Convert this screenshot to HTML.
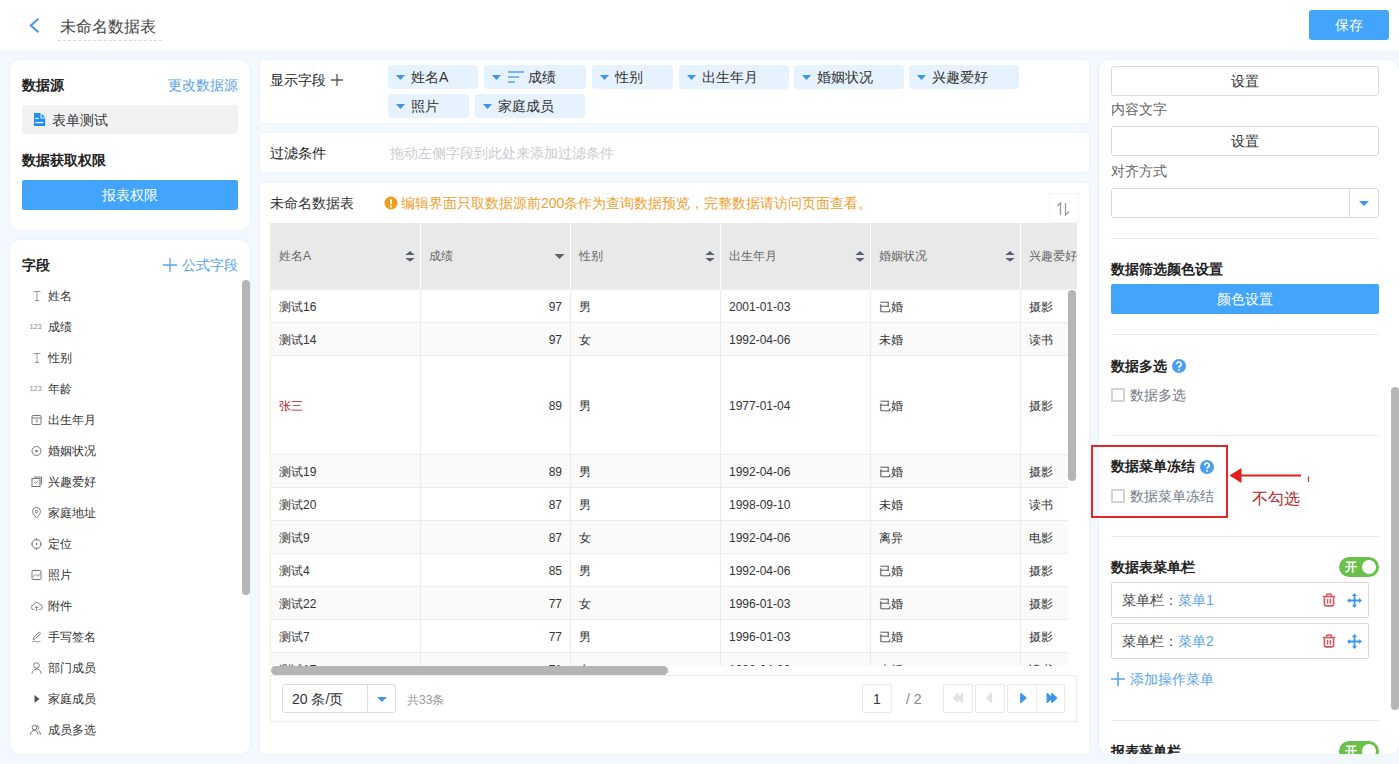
<!DOCTYPE html>
<html><head><meta charset="utf-8">
<style>
*{box-sizing:border-box;margin:0;padding:0}
html,body{width:1399px;height:764px;overflow:hidden}
body{position:relative;background:#f2f8fd;font-family:"Liberation Sans",sans-serif;font-size:14px;color:#333}
.a{position:absolute}
.t{position:absolute;white-space:nowrap;line-height:20px;height:20px}
.panel{position:absolute;background:#fff;box-shadow:0 0 2px rgba(30,90,150,0.10)}
.b{font-weight:bold;color:#222}
.blue{color:#5aa3e6}
.btnb{position:absolute;background:#42a5fb;color:#fff;text-align:center;border-radius:2px;font-size:14px}
.hdiv{position:absolute;height:1px;background:#e9e9e9}
</style></head><body>
<!-- header -->
<div class="a" style="left:0;top:0;width:1399px;height:50px;background:#fff"></div>
<svg class="a" style="left:28px;top:17px" width="14" height="18" viewBox="0 0 14 18"><path d="M10.5 1.8 L2.8 8.5 L10.5 15.2" fill="none" stroke="#4a94e6" stroke-width="2"/></svg>
<div class="t" style="left:60px;top:17px;font-size:16px;color:#444">未命名数据表</div>
<div class="a" style="left:58px;top:40px;width:104px;border-top:1px dashed #d8d8d8"></div>
<div class="btnb" style="left:1309px;top:10px;width:80px;height:30px;line-height:30px;border-radius:3px">保存</div>

<!-- left panel 1 -->
<div class="panel" style="left:10px;top:60px;width:240px;height:170px;border-radius:10px"></div>
<div class="t b" style="left:22px;top:75px">数据源</div>
<div class="t blue" style="left:168px;top:75px">更改数据源</div>
<div class="a" style="left:22px;top:105px;width:216px;height:29px;background:#f2f2f2;border-radius:2px"></div>
<svg class="a" style="left:33px;top:113px" width="13" height="14" viewBox="0 0 13 14"><path d="M1 0 H7.5 V5.6 H12.2 V13 H1 Z" fill="#1e8cf0"/><path d="M8.6 0.6 L12.2 4.6 H8.6 Z" fill="#1e8cf0"/><rect x="2.2" y="4.8" width="3.4" height="1.3" fill="#fff"/><rect x="2.2" y="8.9" width="8.2" height="1.3" fill="#fff"/></svg>
<div class="t" style="left:52px;top:110px">表单测试</div>
<div class="t b" style="left:22px;top:150px">数据获取权限</div>
<div class="btnb" style="left:22px;top:180px;width:216px;height:30px;line-height:30px">报表权限</div>

<!-- left panel 2 -->
<div class="panel" style="left:10px;top:240px;width:240px;height:514px;border-radius:10px"></div>
<div class="t b" style="left:22px;top:255px">字段</div>
<svg class="a" style="left:163px;top:258px" width="14" height="14" viewBox="0 0 14 14"><path d="M7 0 V14 M0 7 H14" stroke="#5aa3e6" stroke-width="1.3"/></svg>
<div class="t blue" style="left:182px;top:255px">公式字段</div>
<div class="a" style="left:242px;top:280px;width:8px;height:315px;background:#b5b5b5;border-radius:4px"></div>
<svg class="a" style="left:31px;top:290px" width="12" height="12" viewBox="0 0 11 12"><path d="M2 1.5 H9 M5.5 1.5 V10.5 M3.5 10.5 H7.5" stroke="#8c8c8c" stroke-width="0.9" fill="none"/></svg>
<div class="t" style="left:48px;top:286px;color:#333;font-size:12px">姓名</div>
<div class="a" style="left:29.5px;top:321px;font-size:7.4px;line-height:12px;color:#8a8a8a">123</div>
<div class="t" style="left:48px;top:317px;color:#333;font-size:12px">成绩</div>
<svg class="a" style="left:31px;top:352px" width="12" height="12" viewBox="0 0 11 12"><path d="M2 1.5 H9 M5.5 1.5 V10.5 M3.5 10.5 H7.5" stroke="#8c8c8c" stroke-width="0.9" fill="none"/></svg>
<div class="t" style="left:48px;top:348px;color:#333;font-size:12px">性别</div>
<div class="a" style="left:29.5px;top:383px;font-size:7.4px;line-height:12px;color:#8a8a8a">123</div>
<div class="t" style="left:48px;top:379px;color:#333;font-size:12px">年龄</div>
<svg class="a" style="left:31px;top:414px" width="12" height="12" viewBox="0 0 11 12"><rect x="0.5" y="1.5" width="9" height="9" rx="1" stroke="#777" fill="none"/><path d="M0.5 4 H9.5" stroke="#777"/><path d="M4 6 H6 L5 9" stroke="#777" fill="none" stroke-width="0.8"/></svg>
<div class="t" style="left:48px;top:410px;color:#333;font-size:12px">出生年月</div>
<svg class="a" style="left:31px;top:445px" width="12" height="12" viewBox="0 0 11 12"><circle cx="5" cy="6" r="4.5" stroke="#777" fill="none"/><circle cx="5" cy="6" r="1.3" fill="#777"/></svg>
<div class="t" style="left:48px;top:441px;color:#333;font-size:12px">婚姻状况</div>
<svg class="a" style="left:31px;top:476px" width="12" height="12" viewBox="0 0 11 12"><rect x="0.5" y="2.5" width="8" height="8" stroke="#777" fill="none"/><path d="M2.5 1 H10 V8.5" stroke="#777" fill="none"/><path d="M2.5 6 L4 7.5 L7 4.5" stroke="#777" fill="none" stroke-width="0.8"/></svg>
<div class="t" style="left:48px;top:472px;color:#333;font-size:12px">兴趣爱好</div>
<svg class="a" style="left:31px;top:507px" width="12" height="12" viewBox="0 0 11 12"><path d="M5 11 C2 7.5 1 6 1 4.5 A4 4 0 0 1 9 4.5 C9 6 8 7.5 5 11 Z" stroke="#777" fill="none"/><circle cx="5" cy="4.5" r="1.3" stroke="#777" fill="none"/></svg>
<div class="t" style="left:48px;top:503px;color:#333;font-size:12px">家庭地址</div>
<svg class="a" style="left:31px;top:538px" width="12" height="12" viewBox="0 0 11 12"><circle cx="5" cy="6" r="4.5" stroke="#777" fill="none"/><circle cx="5" cy="6" r="1" fill="#777"/><path d="M5 0.5 V2.5 M5 9.5 V11.5 M-0.5 6 H1.5 M8.5 6 H10.5" stroke="#777"/></svg>
<div class="t" style="left:48px;top:534px;color:#333;font-size:12px">定位</div>
<svg class="a" style="left:31px;top:569px" width="12" height="12" viewBox="0 0 11 12"><rect x="0.5" y="1.5" width="9" height="9" rx="1" stroke="#777" fill="none"/><path d="M1 8 L4 5.5 L6 7 L9 5" stroke="#777" fill="none" stroke-width="0.8"/></svg>
<div class="t" style="left:48px;top:565px;color:#333;font-size:12px">照片</div>
<svg class="a" style="left:31px;top:600px" width="12" height="12" viewBox="0 0 11 12"><path d="M3 9.5 H2.2 A2.2 2.2 0 0 1 2 5.1 A3.2 3.2 0 0 1 8.2 4.6 A2.4 2.4 0 0 1 8.4 9.5 H7" stroke="#777" fill="none" stroke-width="0.9"/><path d="M5 11 V6.5 M3.4 8 L5 6.4 L6.6 8" stroke="#777" fill="none" stroke-width="0.9"/></svg>
<div class="t" style="left:48px;top:596px;color:#333;font-size:12px">附件</div>
<svg class="a" style="left:31px;top:631px" width="12" height="12" viewBox="0 0 11 12"><path d="M1.5 8.5 L2.3 6.2 L7.6 0.9 L9.2 2.5 L3.9 7.8 Z" stroke="#777" fill="none" stroke-width="0.9"/><path d="M0.5 11 Q3 9.5 5 10.8 Q7 11.5 9 10" stroke="#777" fill="none" stroke-width="0.8"/></svg>
<div class="t" style="left:48px;top:627px;color:#333;font-size:12px">手写签名</div>
<svg class="a" style="left:31px;top:662px" width="12" height="12" viewBox="0 0 11 12"><circle cx="5" cy="3.5" r="2.8" stroke="#777" fill="none"/><path d="M0.5 11.5 A4.5 4.5 0 0 1 9.5 11.5" stroke="#777" fill="none"/></svg>
<div class="t" style="left:48px;top:658px;color:#333;font-size:12px">部门成员</div>
<svg class="a" style="left:31px;top:693px" width="12" height="12" viewBox="0 0 11 12"><path d="M3 2 L8 6 L3 10 Z" fill="#555"/></svg>
<div class="t" style="left:48px;top:689px;color:#333;font-size:12px">家庭成员</div>
<svg class="a" style="left:29px;top:724px" width="12" height="12" viewBox="0 0 11 12"><circle cx="5" cy="3.6" r="2.3" stroke="#666" fill="none" stroke-width="0.9"/><path d="M0.8 10.8 Q1.6 6.6 5 6.5 Q8 6.6 8.8 10.8" stroke="#666" fill="none" stroke-width="0.9"/><path d="M7.2 1.4 A2.3 2.3 0 0 1 7.8 5.8" stroke="#666" fill="none" stroke-width="0.9"/><path d="M8.8 6.8 Q10.8 7.8 11.3 10.8" stroke="#666" fill="none" stroke-width="0.9"/></svg>
<div class="t" style="left:48px;top:720px;color:#333;font-size:12px">成员多选</div>

<!-- center panel 1 -->
<div class="panel" style="left:260px;top:60px;width:829px;height:63px;border-radius:4px"></div>
<div class="t" style="left:270px;top:70px;color:#222">显示字段</div>
<svg class="a" style="left:331px;top:74px" width="12" height="12" viewBox="0 0 12 12"><path d="M6 0 V12 M0 6 H12" stroke="#555" stroke-width="1.3"/></svg>
<div class="a" style="left:388px;top:65px;width:90px;height:24px;background:#e6f2fd;border-radius:4px"></div>
<svg class="a" style="left:396px;top:75px" width="9" height="5" viewBox="0 0 9 5"><path d="M0 0 H9 L4.5 5 Z" fill="#3d96e8"/></svg>
<div class="t" style="left:411px;top:67px;color:#333">姓名A</div>
<div class="a" style="left:484px;top:65px;width:102px;height:24px;background:#e6f2fd;border-radius:4px"></div>
<svg class="a" style="left:492px;top:75px" width="9" height="5" viewBox="0 0 9 5"><path d="M0 0 H9 L4.5 5 Z" fill="#3d96e8"/></svg>
<svg class="a" style="left:508px;top:71px" width="16" height="12" viewBox="0 0 16 12"><path d="M0 1 H16 M0 6 H11 M0 11 H7" stroke="#5aa3e6" stroke-width="1.3"/></svg>
<div class="t" style="left:528px;top:67px;color:#333">成绩</div>
<div class="a" style="left:592px;top:65px;width:81px;height:24px;background:#e6f2fd;border-radius:4px"></div>
<svg class="a" style="left:600px;top:75px" width="9" height="5" viewBox="0 0 9 5"><path d="M0 0 H9 L4.5 5 Z" fill="#3d96e8"/></svg>
<div class="t" style="left:615px;top:67px;color:#333">性别</div>
<div class="a" style="left:679px;top:65px;width:110px;height:24px;background:#e6f2fd;border-radius:4px"></div>
<svg class="a" style="left:687px;top:75px" width="9" height="5" viewBox="0 0 9 5"><path d="M0 0 H9 L4.5 5 Z" fill="#3d96e8"/></svg>
<div class="t" style="left:702px;top:67px;color:#333">出生年月</div>
<div class="a" style="left:794px;top:65px;width:110px;height:24px;background:#e6f2fd;border-radius:4px"></div>
<svg class="a" style="left:802px;top:75px" width="9" height="5" viewBox="0 0 9 5"><path d="M0 0 H9 L4.5 5 Z" fill="#3d96e8"/></svg>
<div class="t" style="left:817px;top:67px;color:#333">婚姻状况</div>
<div class="a" style="left:909px;top:65px;width:110px;height:24px;background:#e6f2fd;border-radius:4px"></div>
<svg class="a" style="left:917px;top:75px" width="9" height="5" viewBox="0 0 9 5"><path d="M0 0 H9 L4.5 5 Z" fill="#3d96e8"/></svg>
<div class="t" style="left:932px;top:67px;color:#333">兴趣爱好</div>
<div class="a" style="left:388px;top:94px;width:81px;height:24px;background:#e6f2fd;border-radius:4px"></div>
<svg class="a" style="left:396px;top:104px" width="9" height="5" viewBox="0 0 9 5"><path d="M0 0 H9 L4.5 5 Z" fill="#3d96e8"/></svg>
<div class="t" style="left:411px;top:96px;color:#333">照片</div>
<div class="a" style="left:475px;top:94px;width:110px;height:24px;background:#e6f2fd;border-radius:4px"></div>
<svg class="a" style="left:483px;top:104px" width="9" height="5" viewBox="0 0 9 5"><path d="M0 0 H9 L4.5 5 Z" fill="#3d96e8"/></svg>
<div class="t" style="left:498px;top:96px;color:#333">家庭成员</div>

<!-- center panel 2 -->
<div class="panel" style="left:260px;top:133px;width:829px;height:39px;border-radius:4px"></div>
<div class="t" style="left:270px;top:143px;color:#222">过滤条件</div>
<div class="t" style="left:390px;top:143px;color:#c8ccd2">拖动左侧字段到此处来添加过滤条件</div>

<!-- center panel 3 -->
<div class="panel" style="left:260px;top:183px;width:829px;height:571px;border-radius:4px"></div>
<div class="t" style="left:270px;top:193px;color:#333">未命名数据表</div>
<svg class="a" style="left:384px;top:196px" width="14" height="14" viewBox="0 0 14 14"><circle cx="7" cy="7" r="6.5" fill="#f29d1a"/><rect x="6" y="3" width="2" height="5.5" rx="1" fill="#fff"/><circle cx="7" cy="10.6" r="1.1" fill="#fff"/></svg>
<div class="t" style="left:401px;top:193px;color:#f0a030">编辑界面只取数据源前200条作为查询数据预览，完整数据请访问页面查看。</div>
<div class="a" style="left:1049px;top:193px;width:30px;height:30px;border:1px solid #f4f4f4;background:#fff"></div>
<svg class="a" style="left:1056px;top:202px" width="16" height="14" viewBox="0 0 16 14"><path d="M1.5 4 L4.5 1 V13" stroke="#9a9a9a" stroke-width="1.3" fill="none"/><path d="M9.5 1 V13 L13 9.5" stroke="#9a9a9a" stroke-width="1.3" fill="none"/></svg>
<div class="a" style="left:270px;top:223px;width:807px;height:66px;background:#e9e9e9"></div>
<div class="t" style="left:279px;top:246px;color:#666;font-size:12px">姓名A</div>
<svg class="a" style="left:405px;top:250px" width="10" height="12" viewBox="0 0 10 12"><path d="M0.3 4.9 L5 1 L9.7 4.9 Z M0.3 7.9 L5 11.8 L9.7 7.9 Z" fill="#59626e"/></svg>
<div class="a" style="left:420px;top:223px;width:1px;height:66px;background:#fff"></div>
<div class="t" style="left:429px;top:246px;color:#666;font-size:12px">成绩</div>
<svg class="a" style="left:554px;top:254px" width="11" height="5" viewBox="0 0 11 5"><path d="M0.5 0 H10.5 L5.5 5 Z" fill="#59626e"/></svg>
<div class="a" style="left:570px;top:223px;width:1px;height:66px;background:#fff"></div>
<div class="t" style="left:579px;top:246px;color:#666;font-size:12px">性别</div>
<svg class="a" style="left:705px;top:250px" width="10" height="12" viewBox="0 0 10 12"><path d="M0.3 4.9 L5 1 L9.7 4.9 Z M0.3 7.9 L5 11.8 L9.7 7.9 Z" fill="#59626e"/></svg>
<div class="a" style="left:720px;top:223px;width:1px;height:66px;background:#fff"></div>
<div class="t" style="left:729px;top:246px;color:#666;font-size:12px">出生年月</div>
<svg class="a" style="left:855px;top:250px" width="10" height="12" viewBox="0 0 10 12"><path d="M0.3 4.9 L5 1 L9.7 4.9 Z M0.3 7.9 L5 11.8 L9.7 7.9 Z" fill="#59626e"/></svg>
<div class="a" style="left:870px;top:223px;width:1px;height:66px;background:#fff"></div>
<div class="t" style="left:879px;top:246px;color:#666;font-size:12px">婚姻状况</div>
<svg class="a" style="left:1005px;top:250px" width="10" height="12" viewBox="0 0 10 12"><path d="M0.3 4.9 L5 1 L9.7 4.9 Z M0.3 7.9 L5 11.8 L9.7 7.9 Z" fill="#59626e"/></svg>
<div class="a" style="left:1020px;top:223px;width:1px;height:66px;background:#fff"></div>
<div class="t" style="left:1029px;top:246px;color:#666;font-size:12px">兴趣爱好</div>
<div class="a" style="left:270px;top:289px;width:798px;height:1px;background:#f0f0f0"></div>
<div class="a" style="left:270px;top:290px;width:798px;height:376px;overflow:hidden">
<div class="a" style="left:0;top:0px;width:798px;height:33px;background:#fff;border-bottom:1px solid #ebebeb"></div>
<div class="t" style="left:9px;top:7px;color:#333;font-size:12px">测试16</div>
<div class="a" style="left:150px;top:0px;width:1px;height:33px;background:#ebebeb"></div>
<div class="t" style="left:150px;width:142px;text-align:right;top:7px;color:#333;font-size:12px">97</div>
<div class="a" style="left:300px;top:0px;width:1px;height:33px;background:#ebebeb"></div>
<div class="t" style="left:309px;top:7px;color:#333;font-size:12px">男</div>
<div class="a" style="left:450px;top:0px;width:1px;height:33px;background:#ebebeb"></div>
<div class="t" style="left:459px;top:7px;color:#333;font-size:12px">2001-01-03</div>
<div class="a" style="left:600px;top:0px;width:1px;height:33px;background:#ebebeb"></div>
<div class="t" style="left:609px;top:7px;color:#333;font-size:12px">已婚</div>
<div class="a" style="left:750px;top:0px;width:1px;height:33px;background:#ebebeb"></div>
<div class="t" style="left:759px;top:7px;color:#333;font-size:12px">摄影</div>
<div class="a" style="left:0;top:33px;width:798px;height:33px;background:#fafafa;border-bottom:1px solid #ebebeb"></div>
<div class="t" style="left:9px;top:40px;color:#333;font-size:12px">测试14</div>
<div class="a" style="left:150px;top:33px;width:1px;height:33px;background:#ebebeb"></div>
<div class="t" style="left:150px;width:142px;text-align:right;top:40px;color:#333;font-size:12px">97</div>
<div class="a" style="left:300px;top:33px;width:1px;height:33px;background:#ebebeb"></div>
<div class="t" style="left:309px;top:40px;color:#333;font-size:12px">女</div>
<div class="a" style="left:450px;top:33px;width:1px;height:33px;background:#ebebeb"></div>
<div class="t" style="left:459px;top:40px;color:#333;font-size:12px">1992-04-06</div>
<div class="a" style="left:600px;top:33px;width:1px;height:33px;background:#ebebeb"></div>
<div class="t" style="left:609px;top:40px;color:#333;font-size:12px">未婚</div>
<div class="a" style="left:750px;top:33px;width:1px;height:33px;background:#ebebeb"></div>
<div class="t" style="left:759px;top:40px;color:#333;font-size:12px">读书</div>
<div class="a" style="left:0;top:66px;width:798px;height:99px;background:#fff;border-bottom:1px solid #ebebeb"></div>
<div class="t" style="left:9px;top:106px;color:#b4232a;font-size:12px">张三</div>
<div class="a" style="left:150px;top:66px;width:1px;height:99px;background:#ebebeb"></div>
<div class="t" style="left:150px;width:142px;text-align:right;top:106px;color:#333;font-size:12px">89</div>
<div class="a" style="left:300px;top:66px;width:1px;height:99px;background:#ebebeb"></div>
<div class="t" style="left:309px;top:106px;color:#333;font-size:12px">男</div>
<div class="a" style="left:450px;top:66px;width:1px;height:99px;background:#ebebeb"></div>
<div class="t" style="left:459px;top:106px;color:#333;font-size:12px">1977-01-04</div>
<div class="a" style="left:600px;top:66px;width:1px;height:99px;background:#ebebeb"></div>
<div class="t" style="left:609px;top:106px;color:#333;font-size:12px">已婚</div>
<div class="a" style="left:750px;top:66px;width:1px;height:99px;background:#ebebeb"></div>
<div class="t" style="left:759px;top:106px;color:#333;font-size:12px">摄影</div>
<div class="a" style="left:0;top:165px;width:798px;height:33px;background:#fafafa;border-bottom:1px solid #ebebeb"></div>
<div class="t" style="left:9px;top:172px;color:#333;font-size:12px">测试19</div>
<div class="a" style="left:150px;top:165px;width:1px;height:33px;background:#ebebeb"></div>
<div class="t" style="left:150px;width:142px;text-align:right;top:172px;color:#333;font-size:12px">89</div>
<div class="a" style="left:300px;top:165px;width:1px;height:33px;background:#ebebeb"></div>
<div class="t" style="left:309px;top:172px;color:#333;font-size:12px">男</div>
<div class="a" style="left:450px;top:165px;width:1px;height:33px;background:#ebebeb"></div>
<div class="t" style="left:459px;top:172px;color:#333;font-size:12px">1992-04-06</div>
<div class="a" style="left:600px;top:165px;width:1px;height:33px;background:#ebebeb"></div>
<div class="t" style="left:609px;top:172px;color:#333;font-size:12px">已婚</div>
<div class="a" style="left:750px;top:165px;width:1px;height:33px;background:#ebebeb"></div>
<div class="t" style="left:759px;top:172px;color:#333;font-size:12px">摄影</div>
<div class="a" style="left:0;top:198px;width:798px;height:33px;background:#fff;border-bottom:1px solid #ebebeb"></div>
<div class="t" style="left:9px;top:205px;color:#333;font-size:12px">测试20</div>
<div class="a" style="left:150px;top:198px;width:1px;height:33px;background:#ebebeb"></div>
<div class="t" style="left:150px;width:142px;text-align:right;top:205px;color:#333;font-size:12px">87</div>
<div class="a" style="left:300px;top:198px;width:1px;height:33px;background:#ebebeb"></div>
<div class="t" style="left:309px;top:205px;color:#333;font-size:12px">男</div>
<div class="a" style="left:450px;top:198px;width:1px;height:33px;background:#ebebeb"></div>
<div class="t" style="left:459px;top:205px;color:#333;font-size:12px">1998-09-10</div>
<div class="a" style="left:600px;top:198px;width:1px;height:33px;background:#ebebeb"></div>
<div class="t" style="left:609px;top:205px;color:#333;font-size:12px">未婚</div>
<div class="a" style="left:750px;top:198px;width:1px;height:33px;background:#ebebeb"></div>
<div class="t" style="left:759px;top:205px;color:#333;font-size:12px">读书</div>
<div class="a" style="left:0;top:231px;width:798px;height:33px;background:#fafafa;border-bottom:1px solid #ebebeb"></div>
<div class="t" style="left:9px;top:238px;color:#333;font-size:12px">测试9</div>
<div class="a" style="left:150px;top:231px;width:1px;height:33px;background:#ebebeb"></div>
<div class="t" style="left:150px;width:142px;text-align:right;top:238px;color:#333;font-size:12px">87</div>
<div class="a" style="left:300px;top:231px;width:1px;height:33px;background:#ebebeb"></div>
<div class="t" style="left:309px;top:238px;color:#333;font-size:12px">女</div>
<div class="a" style="left:450px;top:231px;width:1px;height:33px;background:#ebebeb"></div>
<div class="t" style="left:459px;top:238px;color:#333;font-size:12px">1992-04-06</div>
<div class="a" style="left:600px;top:231px;width:1px;height:33px;background:#ebebeb"></div>
<div class="t" style="left:609px;top:238px;color:#333;font-size:12px">离异</div>
<div class="a" style="left:750px;top:231px;width:1px;height:33px;background:#ebebeb"></div>
<div class="t" style="left:759px;top:238px;color:#333;font-size:12px">电影</div>
<div class="a" style="left:0;top:264px;width:798px;height:33px;background:#fff;border-bottom:1px solid #ebebeb"></div>
<div class="t" style="left:9px;top:271px;color:#333;font-size:12px">测试4</div>
<div class="a" style="left:150px;top:264px;width:1px;height:33px;background:#ebebeb"></div>
<div class="t" style="left:150px;width:142px;text-align:right;top:271px;color:#333;font-size:12px">85</div>
<div class="a" style="left:300px;top:264px;width:1px;height:33px;background:#ebebeb"></div>
<div class="t" style="left:309px;top:271px;color:#333;font-size:12px">男</div>
<div class="a" style="left:450px;top:264px;width:1px;height:33px;background:#ebebeb"></div>
<div class="t" style="left:459px;top:271px;color:#333;font-size:12px">1992-04-06</div>
<div class="a" style="left:600px;top:264px;width:1px;height:33px;background:#ebebeb"></div>
<div class="t" style="left:609px;top:271px;color:#333;font-size:12px">已婚</div>
<div class="a" style="left:750px;top:264px;width:1px;height:33px;background:#ebebeb"></div>
<div class="t" style="left:759px;top:271px;color:#333;font-size:12px">摄影</div>
<div class="a" style="left:0;top:297px;width:798px;height:33px;background:#fafafa;border-bottom:1px solid #ebebeb"></div>
<div class="t" style="left:9px;top:304px;color:#333;font-size:12px">测试22</div>
<div class="a" style="left:150px;top:297px;width:1px;height:33px;background:#ebebeb"></div>
<div class="t" style="left:150px;width:142px;text-align:right;top:304px;color:#333;font-size:12px">77</div>
<div class="a" style="left:300px;top:297px;width:1px;height:33px;background:#ebebeb"></div>
<div class="t" style="left:309px;top:304px;color:#333;font-size:12px">女</div>
<div class="a" style="left:450px;top:297px;width:1px;height:33px;background:#ebebeb"></div>
<div class="t" style="left:459px;top:304px;color:#333;font-size:12px">1996-01-03</div>
<div class="a" style="left:600px;top:297px;width:1px;height:33px;background:#ebebeb"></div>
<div class="t" style="left:609px;top:304px;color:#333;font-size:12px">已婚</div>
<div class="a" style="left:750px;top:297px;width:1px;height:33px;background:#ebebeb"></div>
<div class="t" style="left:759px;top:304px;color:#333;font-size:12px">摄影</div>
<div class="a" style="left:0;top:330px;width:798px;height:33px;background:#fff;border-bottom:1px solid #ebebeb"></div>
<div class="t" style="left:9px;top:337px;color:#333;font-size:12px">测试7</div>
<div class="a" style="left:150px;top:330px;width:1px;height:33px;background:#ebebeb"></div>
<div class="t" style="left:150px;width:142px;text-align:right;top:337px;color:#333;font-size:12px">77</div>
<div class="a" style="left:300px;top:330px;width:1px;height:33px;background:#ebebeb"></div>
<div class="t" style="left:309px;top:337px;color:#333;font-size:12px">男</div>
<div class="a" style="left:450px;top:330px;width:1px;height:33px;background:#ebebeb"></div>
<div class="t" style="left:459px;top:337px;color:#333;font-size:12px">1996-01-03</div>
<div class="a" style="left:600px;top:330px;width:1px;height:33px;background:#ebebeb"></div>
<div class="t" style="left:609px;top:337px;color:#333;font-size:12px">已婚</div>
<div class="a" style="left:750px;top:330px;width:1px;height:33px;background:#ebebeb"></div>
<div class="t" style="left:759px;top:337px;color:#333;font-size:12px">摄影</div>
<div class="a" style="left:0;top:363px;width:798px;height:33px;background:#fafafa;border-bottom:1px solid #ebebeb"></div>
<div class="t" style="left:9px;top:370px;color:#333;font-size:12px">测试17</div>
<div class="a" style="left:150px;top:363px;width:1px;height:33px;background:#ebebeb"></div>
<div class="t" style="left:150px;width:142px;text-align:right;top:370px;color:#333;font-size:12px">71</div>
<div class="a" style="left:300px;top:363px;width:1px;height:33px;background:#ebebeb"></div>
<div class="t" style="left:309px;top:370px;color:#333;font-size:12px">女</div>
<div class="a" style="left:450px;top:363px;width:1px;height:33px;background:#ebebeb"></div>
<div class="t" style="left:459px;top:370px;color:#333;font-size:12px">1996-04-03</div>
<div class="a" style="left:600px;top:363px;width:1px;height:33px;background:#ebebeb"></div>
<div class="t" style="left:609px;top:370px;color:#333;font-size:12px">未婚</div>
<div class="a" style="left:750px;top:363px;width:1px;height:33px;background:#ebebeb"></div>
<div class="t" style="left:759px;top:370px;color:#333;font-size:12px">读书</div>
</div>
<div class="a" style="left:270px;top:289px;width:1px;height:377px;background:#eeeeee"></div>
<div class="a" style="left:1068px;top:290px;width:8px;height:191px;background:#b5b5b5;border-radius:4px"></div>
<div class="a" style="left:271px;top:666px;width:397px;height:9px;background:#b5b5b5;border-radius:4.5px"></div>
<div class="a" style="left:270px;top:675px;width:807px;height:47px;border:1px solid #ebebeb;border-top:1px solid #ececec"></div>
<div class="a" style="left:282px;top:684px;width:114px;height:29px;border:1px solid #dcdcdc;border-radius:3px;background:#fff"></div>
<div class="a" style="left:367px;top:684px;width:1px;height:29px;background:#dcdcdc"></div>
<div class="t" style="left:292px;top:689px;font-size:14px;color:#333">20 条/页</div>
<svg class="a" style="left:377px;top:697px" width="10" height="5" viewBox="0 0 10 5"><path d="M0 0 H10 L5 5 Z" fill="#3d96e8"/></svg>
<div class="t" style="left:407px;top:690px;font-size:12px;color:#999">共33条</div>
<div class="a" style="left:862px;top:684px;width:30px;height:29px;border:1px solid #e8e8e8;border-radius:2px"></div>
<div class="t" style="left:862px;width:30px;text-align:center;top:689px;font-size:14px;color:#333">1</div>
<div class="t" style="left:906px;top:689px;font-size:14px;color:#888">/ 2</div>
<div class="a" style="left:943px;top:684px;width:30px;height:29px;border:1px solid #e8e8e8;border-radius:2px"></div>
<div class="a" style="left:975px;top:684px;width:30px;height:29px;border:1px solid #e8e8e8;border-radius:2px"></div>
<div class="a" style="left:1007px;top:684px;width:58px;height:29px;border:1px solid #e8e8e8;border-radius:2px"></div>
<div class="a" style="left:1036px;top:684px;width:1px;height:29px;background:#ececec"></div>
<svg class="a" style="left:952px;top:692px" width="12" height="12" viewBox="0 0 12 12"><path d="M6 1.5 L1.5 6 L6 10.5 Z M10.5 1.5 L6 6 L10.5 10.5 Z" fill="#e2e2e2" stroke="#e2e2e2" stroke-width="1.2" stroke-linejoin="round"/></svg>
<svg class="a" style="left:985px;top:692px" width="8" height="12" viewBox="0 0 8 12"><path d="M6.5 1.5 L1.8 6 L6.5 10.5 Z" fill="#e2e2e2" stroke="#e2e2e2" stroke-width="1.2" stroke-linejoin="round"/></svg>
<svg class="a" style="left:1019px;top:692px" width="9" height="12" viewBox="0 0 9 12"><path d="M1.8 1.6 L7 6 L1.8 10.4 Z" fill="#3d96e8" stroke="#3d96e8" stroke-width="1.4" stroke-linejoin="round"/></svg>
<svg class="a" style="left:1046px;top:692px" width="12" height="12" viewBox="0 0 12 12"><path d="M1.2 1.6 L6 6 L1.2 10.4 Z M5.8 1.6 L10.6 6 L5.8 10.4 Z" fill="#3d96e8" stroke="#3d96e8" stroke-width="1.3" stroke-linejoin="round"/></svg>

<!-- right panel -->
<div class="panel" style="left:1099px;top:60px;width:300px;height:694px;border-radius:10px"></div>
<div class="a" style="left:1111px;top:66px;width:268px;height:30px;border:1px solid #d9d9d9;border-radius:3px;background:#fff;text-align:center;line-height:28px;font-size:14px;color:#333">设置</div>
<div class="t" style="left:1111px;top:99px;color:#666">内容文字</div>
<div class="a" style="left:1111px;top:126px;width:268px;height:30px;border:1px solid #d9d9d9;border-radius:3px;background:#fff;text-align:center;line-height:28px;font-size:14px;color:#333">设置</div>
<div class="t" style="left:1111px;top:161px;color:#666">对齐方式</div>
<div class="a" style="left:1111px;top:188px;width:268px;height:30px;border:1px solid #d9d9d9;border-radius:3px;background:#fff"></div>
<div class="a" style="left:1349px;top:188px;width:1px;height:30px;background:#d9d9d9"></div>
<svg class="a" style="left:1359px;top:201px" width="10" height="5" viewBox="0 0 10 5"><path d="M0 0 H10 L5 5 Z" fill="#3d96e8"/></svg>
<div class="hdiv" style="left:1111px;top:238px;width:268px"></div>
<div class="t b" style="left:1111px;top:259px">数据筛选颜色设置</div>
<div class="btnb" style="left:1111px;top:284px;width:268px;height:30px;line-height:30px">颜色设置</div>
<div class="hdiv" style="left:1111px;top:334px;width:268px"></div>
<div class="t b" style="left:1111px;top:356px">数据多选</div>
<svg class="a" style="left:1172px;top:359px" width="14" height="14" viewBox="0 0 14 14"><circle cx="7" cy="7" r="7" fill="#4a9ff0"/><path d="M4.8 5.3 A2.2 2.2 0 1 1 7.8 7.3 C7.2 7.6 7 8 7 8.8" stroke="#fff" stroke-width="1.6" fill="none"/><circle cx="7" cy="10.8" r="1" fill="#fff"/></svg>
<div class="a" style="left:1111px;top:388px;width:14px;height:14px;border:2px solid #d3d3d3;background:#fff"></div>
<div class="t" style="left:1130px;top:385px;color:#737a84">数据多选</div>
<div class="hdiv" style="left:1111px;top:435px;width:268px"></div>
<div class="a" style="left:1091px;top:445px;width:137px;height:73px;border:2px solid #e0282a"></div>
<div class="t b" style="left:1111px;top:456px">数据菜单冻结</div>
<svg class="a" style="left:1200px;top:460px" width="14" height="14" viewBox="0 0 14 14"><circle cx="7" cy="7" r="7" fill="#4a9ff0"/><path d="M4.8 5.3 A2.2 2.2 0 1 1 7.8 7.3 C7.2 7.6 7 8 7 8.8" stroke="#fff" stroke-width="1.6" fill="none"/><circle cx="7" cy="10.8" r="1" fill="#fff"/></svg>
<div class="a" style="left:1111px;top:489px;width:14px;height:14px;border:2px solid #d3d3d3;background:#fff"></div>
<div class="t" style="left:1130px;top:486px;color:#737a84">数据菜单冻结</div>
<svg class="a" style="left:1228px;top:466px" width="84" height="20" viewBox="0 0 84 20"><path d="M1.5 9.5 L13.5 2 V17 Z" fill="#e41e1e"/><path d="M12 9.5 H73" stroke="#e41e1e" stroke-width="2"/><path d="M80.5 10.5 V16" stroke="#e41e1e" stroke-width="1.2"/></svg>
<div class="t" style="left:1252px;top:489px;color:#b8242a;font-size:16px;font-weight:300">不勾选</div>
<div class="hdiv" style="left:1111px;top:536px;width:268px"></div>
<div class="t b" style="left:1111px;top:557px">数据表菜单栏</div>
<div class="a" style="left:1339px;top:557px;width:40px;height:20px;border-radius:10px;background:#6ac04a"></div>
<div class="a" style="left:1362px;top:560px;width:14px;height:14px;border-radius:7px;background:#fff"></div>
<div class="t" style="left:1345px;top:557px;color:#fff;font-size:12px;font-weight:bold">开</div>
<div class="a" style="left:1111px;top:582px;width:258px;height:36px;border:1px solid #d9d9d9;border-radius:2px;background:#fff"></div>
<div class="t" style="left:1122px;top:590px;color:#444">菜单栏：<span style="color:#5aa3e6">菜单1</span></div>
<svg class="a" style="left:1322px;top:593px" width="14" height="14" viewBox="0 0 14 14"><path d="M4.6 3 V1.9 Q4.6 0.9 5.6 0.9 H8.4 Q9.4 0.9 9.4 1.9 V3" stroke="#d9545c" stroke-width="1.5" fill="none"/><path d="M0.8 3.6 H13.2" stroke="#d9545c" stroke-width="1.7"/><path d="M2.4 4.6 V11.3 Q2.4 12.9 4 12.9 H10 Q11.6 12.9 11.6 11.3 V4.6" stroke="#d9545c" stroke-width="1.6" fill="none"/><path d="M5.6 6 V10.6 M8.4 6 V10.6" stroke="#d9545c" stroke-width="1.5"/></svg>
<svg class="a" style="left:1347px;top:593px" width="15" height="15" viewBox="0 0 15 15"><path d="M7.5 2 V13 M2 7.5 H13" stroke="#3d96e8" stroke-width="1.8"/><path d="M7.5 0 L10 3 H5 Z M7.5 15 L10 12 H5 Z M0 7.5 L3 5 V10 Z M15 7.5 L12 5 V10 Z" fill="#3d96e8"/></svg>
<div class="a" style="left:1111px;top:623px;width:258px;height:36px;border:1px solid #d9d9d9;border-radius:2px;background:#fff"></div>
<div class="t" style="left:1122px;top:631px;color:#444">菜单栏：<span style="color:#5aa3e6">菜单2</span></div>
<svg class="a" style="left:1322px;top:634px" width="14" height="14" viewBox="0 0 14 14"><path d="M4.6 3 V1.9 Q4.6 0.9 5.6 0.9 H8.4 Q9.4 0.9 9.4 1.9 V3" stroke="#d9545c" stroke-width="1.5" fill="none"/><path d="M0.8 3.6 H13.2" stroke="#d9545c" stroke-width="1.7"/><path d="M2.4 4.6 V11.3 Q2.4 12.9 4 12.9 H10 Q11.6 12.9 11.6 11.3 V4.6" stroke="#d9545c" stroke-width="1.6" fill="none"/><path d="M5.6 6 V10.6 M8.4 6 V10.6" stroke="#d9545c" stroke-width="1.5"/></svg>
<svg class="a" style="left:1347px;top:634px" width="15" height="15" viewBox="0 0 15 15"><path d="M7.5 2 V13 M2 7.5 H13" stroke="#3d96e8" stroke-width="1.8"/><path d="M7.5 0 L10 3 H5 Z M7.5 15 L10 12 H5 Z M0 7.5 L3 5 V10 Z M15 7.5 L12 5 V10 Z" fill="#3d96e8"/></svg>
<svg class="a" style="left:1111px;top:672px" width="14" height="14" viewBox="0 0 14 14"><path d="M7 0 V14 M0 7 H14" stroke="#5aa3e6" stroke-width="1.6"/></svg>
<div class="t blue" style="left:1130px;top:669px">添加操作菜单</div>
<div class="hdiv" style="left:1111px;top:720px;width:268px"></div>
<div class="a" style="left:1099px;top:735px;width:300px;height:19px;overflow:hidden;border-radius:0 0 10px 10px">
<div class="t b" style="left:12px;top:6px">报表菜单栏</div>
<div class="a" style="left:240px;top:6px;width:40px;height:20px;border-radius:10px;background:#6ac04a"></div><div class="a" style="left:263px;top:9px;width:14px;height:14px;border-radius:7px;background:#fff"></div><div class="t" style="left:246px;top:6px;color:#fff;font-size:12px;font-weight:bold">开</div>
</div>
<div class="a" style="left:1391px;top:387px;width:8px;height:323px;background:#b5b5b5;border-radius:4px"></div>
</body></html>
